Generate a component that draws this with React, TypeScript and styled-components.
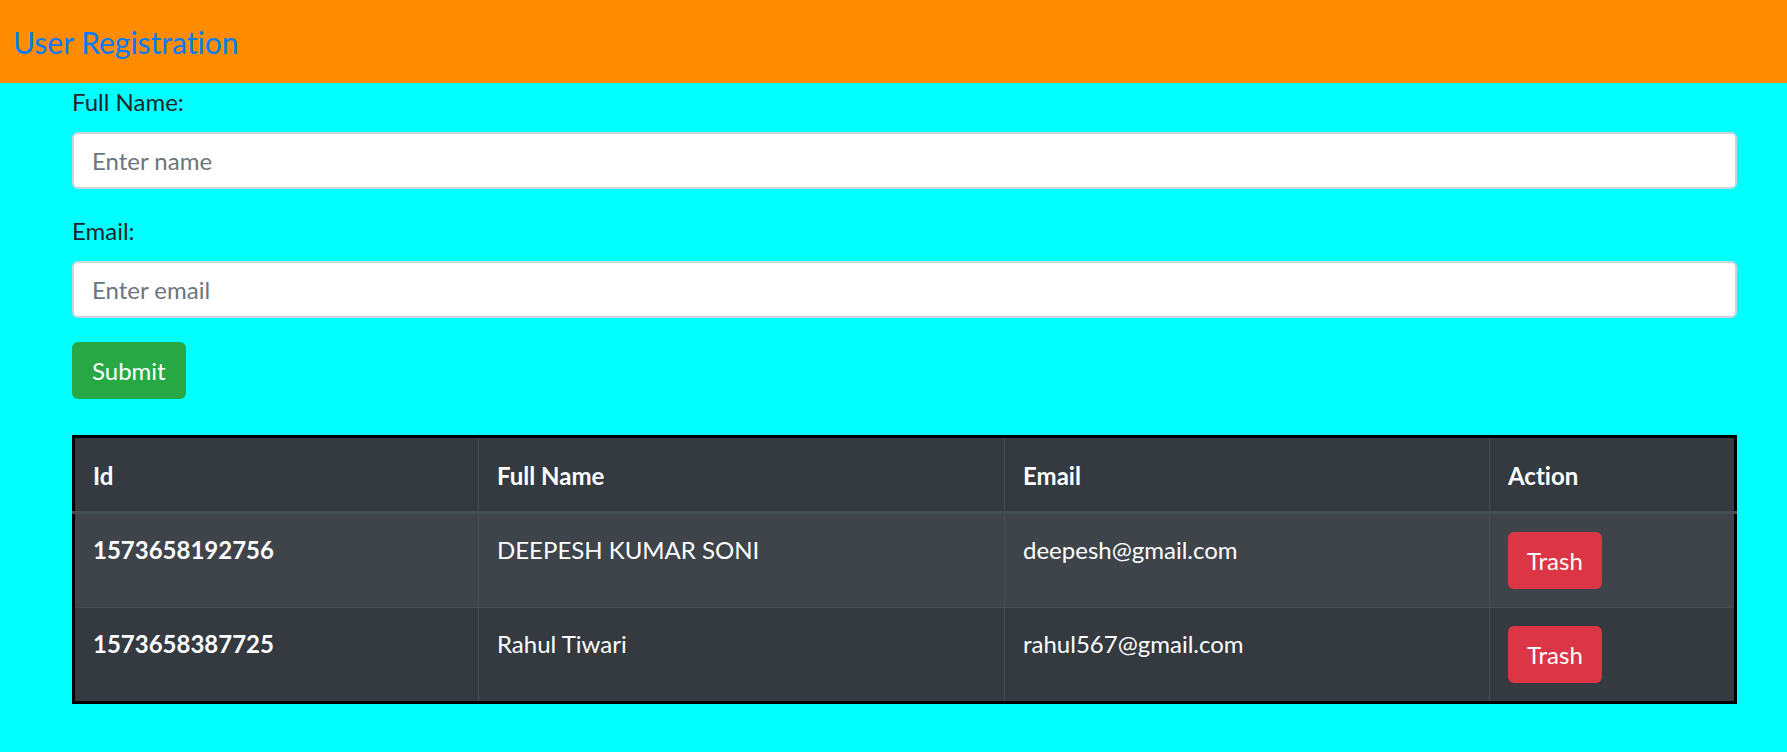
import React from "react";
import styled, { createGlobalStyle } from "styled-components";

const GlobalStyle = createGlobalStyle`
  html, body {
    margin: 0;
    padding: 0;
    background: #00ffff;
  }
  body {
    font-family: Lato, "Noto Sans", "Liberation Sans", sans-serif;
    font-size: 24px;
    line-height: 36px;
    color: #212529;
    font-variant-ligatures: none;
  }
  * { box-sizing: border-box; }
`;

const Header = styled.header`
  height: 83px;
  background: #ff8c00;
  display: flex;
  align-items: center;
  padding: 0 13px;
`;

const Brand = styled.a`
  color: #007bff;
  font-size: 30px;
  line-height: 45px;
  text-decoration: none;
  margin-top: 1px;
`;

const Container = styled.main`
  width: 1665px;
  margin-left: 72px;
  padding-top: 1px;
  padding-bottom: 40px;
`;

const Form = styled.form`
  display: flex;
  flex-direction: column;
  align-items: flex-start;
`;

const FormGroup = styled.div`
  display: flex;
  flex-direction: column;
  width: 100%;
  margin-bottom: 24px;
`;

const Label = styled.label`
  display: block;
  margin-bottom: 12px;
  line-height: 36px;
  color: #212529;
`;

const Input = styled.input`
  width: 100%;
  height: 57px;
  padding: 0 18px;
  font-family: inherit;
  font-size: 24px;
  color: #495057;
  background: #fff;
  border: 2px solid #ced4da;
  border-radius: 6px;
  outline: none;
  &::placeholder {
    color: #6c757d;
    opacity: 1;
  }
`;

const Button = styled.button<{ $variant: "success" | "danger" }>`
  display: inline-flex;
  align-items: center;
  justify-content: center;
  height: 57px;
  padding: 0 ${(p) => (p.$variant === "success" ? 20 : 19)}px;
  font-family: inherit;
  font-size: 24px;
  line-height: 36px;
  color: #fff;
  border: none;
  border-radius: 6px;
  cursor: pointer;
  background: ${(p) => (p.$variant === "success" ? "#28a745" : "#dc3545")};
`;

const Table = styled.table`
  width: 1662px;
  margin-top: 36px;
  border-collapse: collapse;
  table-layout: fixed;
  background: #343a40;
  color: #fff;
  border: 3px solid #000;
`;

const HeadCell = styled.th<{ $w: number }>`
  width: ${(p) => p.$w}px;
  text-align: left;
  font-weight: 700;
  padding: 20px 18px 17px;
  vertical-align: top;
  border: 1px solid #454d55;
  border-bottom: 3px solid #454d55;
`;

const Row = styled.tr<{ $striped: boolean }>`
  background: ${(p) => (p.$striped ? "#3e444a" : "#343a40")};
`;

const Cell = styled.td<{ $bold?: boolean }>`
  padding: 18px 18px;
  vertical-align: top;
  font-weight: ${(p) => (p.$bold ? 700 : 400)};
  border: 1px solid #454d55;
`;

const users = [
  { id: "1573658192756", name: "DEEPESH KUMAR SONI", email: "deepesh@gmail.com" },
  { id: "1573658387725", name: "Rahul Tiwari", email: "rahul567@gmail.com" },
];

export default function App() {
  return (
    <>
      <GlobalStyle />
      <Header>
        <Brand href="#">User Registration</Brand>
      </Header>
      <Container>
        <Form onSubmit={(e) => e.preventDefault()}>
          <FormGroup>
            <Label htmlFor="name">Full Name:</Label>
            <Input id="name" type="text" placeholder="Enter name" />
          </FormGroup>
          <FormGroup>
            <Label htmlFor="email">Email:</Label>
            <Input id="email" type="email" placeholder="Enter email" />
          </FormGroup>
          <Button type="submit" $variant="success">Submit</Button>
        </Form>
        <Table>
          <thead>
            <tr>
              <HeadCell $w={405}>Id</HeadCell>
              <HeadCell $w={526}>Full Name</HeadCell>
              <HeadCell $w={485}>Email</HeadCell>
              <HeadCell $w={246}>Action</HeadCell>
            </tr>
          </thead>
          <tbody>
            {users.map((u, i) => (
              <Row key={u.id} $striped={i % 2 === 0}>
                <Cell $bold>{u.id}</Cell>
                <Cell>{u.name}</Cell>
                <Cell>{u.email}</Cell>
                <Cell>
                  <Button type="button" $variant="danger">Trash</Button>
                </Cell>
              </Row>
            ))}
          </tbody>
        </Table>
      </Container>
    </>
  );
}
